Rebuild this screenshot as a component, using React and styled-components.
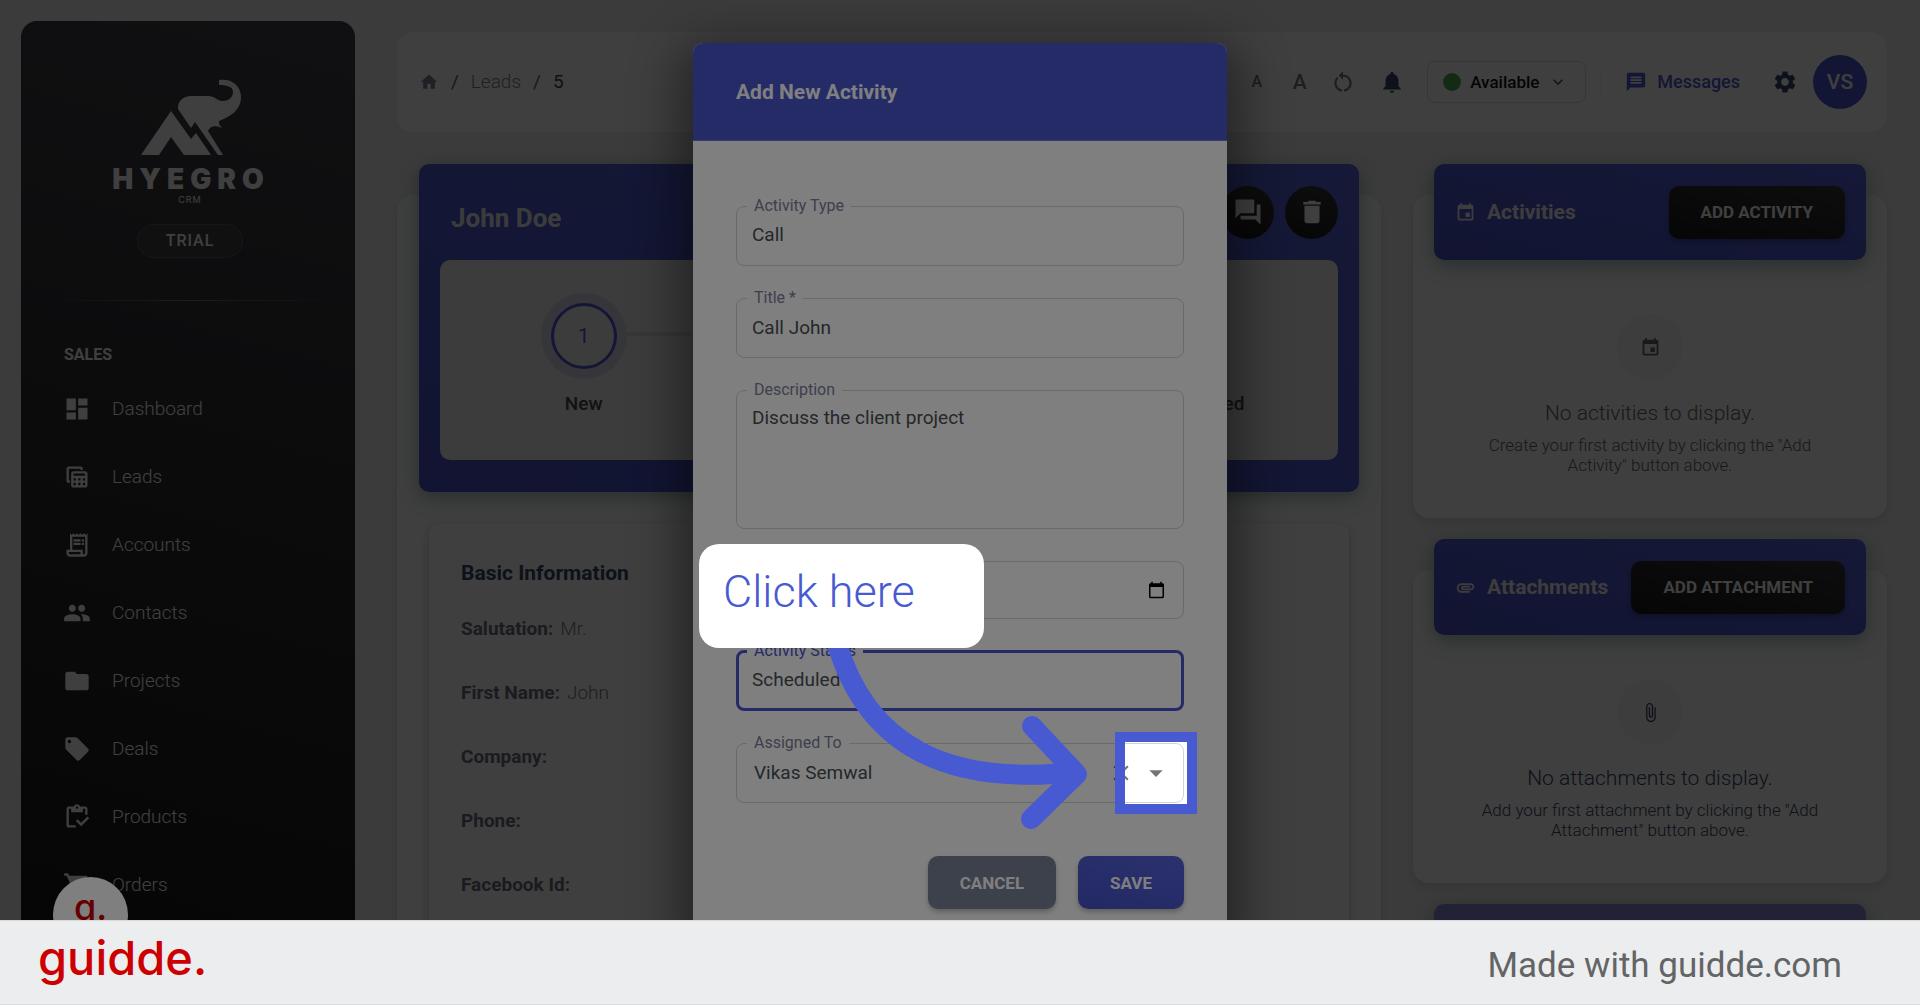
import React, { useState } from "react";
import styled, { createGlobalStyle, css } from "styled-components";
import {
  MdDashboard,
  MdOutlineTableView,
  MdOutlineReceiptLong,
  MdPeople,
  MdFolder,
  MdLocalOffer,
  MdOutlineInventory,
  MdShoppingCart,
  MdHome,
  MdRestartAlt,
  MdNotifications,
  MdExpandMore,
  MdMessage,
  MdSettings,
  MdQuestionAnswer,
  MdDelete,
  MdEvent,
  MdAttachment,
  MdAttachFile,
  MdClose,
  MdArrowDropDown,
} from "react-icons/md";

const GlobalStyle = createGlobalStyle`
  * {
    box-sizing: border-box;
  }
  body {
    margin: 0;
    font-family: Roboto, "Liberation Sans", sans-serif;
    font-size: 19px;
    line-height: 28px;
    color: #344767;
  }
  button, input, select, textarea {
    font: inherit;
    color: inherit;
  }
  a {
    color: inherit;
    text-decoration: none;
  }
  h1, h2, h3, p, dl, dd, ul {
    margin: 0;
    padding: 0;
  }
`;

const blueGradient = "linear-gradient(195deg, #5563da, #4752c8)";
const darkGradient = "linear-gradient(195deg, #36363b, #191919)";

const Page = styled.div`
  display: flex;
  flex-direction: column;
  height: 100vh;
`;

const Stage = styled.div`
  position: relative;
  display: flex;
  flex: 1;
  min-height: 0;
  overflow: hidden;
  background: #ebedeb;
`;

/* ---------- sidebar ---------- */

const Sidebar = styled.aside`
  flex: 0 0 334px;
  display: flex;
  flex-direction: column;
  align-items: center;
  margin: 21px 0 0 21px;
  padding: 58px 0 0 4px;
  border-radius: 16px 16px 0 0;
  background: linear-gradient(195deg, #42424a, #191919);
  color: #fff;
`;

const Brand = styled.div`
  display: flex;
  flex-direction: column;
  align-items: center;
  font-family: Inter, sans-serif;
`;

const BrandName = styled.span`
  margin-top: 8px;
  padding-left: 2px;
  font-size: 28px;
  line-height: 32px;
  font-weight: 900;
  letter-spacing: 6px;
`;

const BrandSub = styled.span`
  font-size: 9px;
  line-height: 10px;
  letter-spacing: 1px;
`;

const Plan = styled.span`
  margin-top: 19px;
  padding: 0 28px;
  border: 1px solid #5c5c60;
  border-radius: 17px;
  background: rgba(255, 255, 255, 0.05);
  font-size: 16px;
  line-height: 32px;
  font-weight: 500;
  letter-spacing: 1px;
`;

const SideRule = styled.hr`
  width: 300px;
  height: 1px;
  margin: 42px 0 0;
  border: 0;
  background: linear-gradient(90deg, transparent, #77777c, transparent);
`;

const SideNav = styled.nav`
  align-self: stretch;
  padding: 40px 38px 0;
`;

const SideTitle = styled.h3`
  padding-left: 1px;
  font-size: 16px;
  line-height: 28px;
  font-weight: 700;
`;

const SideLink = styled.a`
  display: flex;
  align-items: center;
  gap: 21px;
  height: 68px;
  font-weight: 300;

  svg {
    width: 28px;
    height: 28px;
  }
`;

const SideLinks = styled.div`
  margin-top: 6px;
`;

/* ---------- main column ---------- */

const Main = styled.main`
  flex: 1;
  display: flex;
  flex-direction: column;
  gap: 32px;
  min-width: 0;
  padding: 32px 33px 0 42px;
`;

const TopBar = styled.header`
  display: flex;
  align-items: center;
  justify-content: space-between;
  flex-shrink: 0;
  height: 100px;
  padding: 0 20px 0 22px;
  border-radius: 16px;
  background: #fdfdfd;
`;

const Crumbs = styled.nav`
  display: flex;
  align-items: center;
  gap: 12px;
  font-weight: 300;
  color: #7b809a;

  svg {
    width: 20px;
    height: 20px;
  }
  b {
    font-weight: 400;
    color: #344767;
  }
`;

const Slash = styled.span`
  font-weight: 400;
  color: #5c636a;
`;

const Tools = styled.div`
  display: flex;
  align-items: center;
`;

const ToolButton = styled.button`
  display: flex;
  align-items: center;
  justify-content: center;
  width: ${(p) => p.$width || 43}px;
  height: 44px;
  padding: 0;
  border: 0;
  background: none;
  font-size: ${(p) => p.$size || 21}px;
  font-weight: 500;
  color: ${(p) => p.$color || "#777"};

  svg {
    width: 26px;
    height: 26px;
  }
`;

const StatusButton = styled.button`
  display: flex;
  align-items: center;
  gap: 9px;
  width: 159px;
  height: 42px;
  margin: 0 14px 0 7px;
  padding: 0 12px 0 15px;
  border: 1px solid #d8d8d8;
  border-radius: 8px;
  background: none;
  font-size: 17px;
  font-weight: 500;
  color: #111;
  white-space: nowrap;

  svg {
    width: 20px;
    height: 20px;
    color: #555;
  }
`;

const Dot = styled.i`
  flex: 0 0 18px;
  height: 18px;
  border-radius: 50%;
  background: #4caf50;
`;

const MessagesLink = styled.a`
  display: flex;
  align-items: center;
  gap: 10px;
  margin-right: 23px;
  padding-left: 24px;
  border-left: 1px solid #f0f0f0;
  font-size: 18px;
  font-weight: 500;
  color: #4c5bd4;

  svg {
    width: 22px;
    height: 22px;
  }
`;

const Avatar = styled.span`
  width: 54px;
  height: 54px;
  margin-left: 7px;
  border-radius: 50%;
  background: #4a58d0;
  font-size: 21px;
  line-height: 54px;
  font-weight: 500;
  text-align: center;
  color: #fff;
`;

const Columns = styled.div`
  display: flex;
  align-items: flex-start;
  gap: 32px;
`;

const Card = styled.section`
  margin-top: 31px;
  border-radius: 16px;
  background: #fcfcfc;
  box-shadow: 0 5px 8px rgba(0, 0, 0, 0.1);
`;

const LeadCard = styled(Card)`
  flex: 1;
  min-width: 0;
  padding: 0 22px 32px;
`;

const LeadHeader = styled.div`
  margin-top: -31px;
  padding: 0 21px 32px;
  border-radius: 10px;
  background: ${blueGradient};
  box-shadow: 0 5px 20px rgba(0, 60, 60, 0.35);
`;

const LeadBar = styled.div`
  display: flex;
  align-items: center;
  gap: 11px;
  height: 96px;
`;

const LeadName = styled.h1`
  flex: 1;
  padding: 11px 0 0 11px;
  font-size: 26px;
  line-height: 36px;
  font-weight: 700;
  color: #eee;
`;

const RoundButton = styled.button`
  display: flex;
  align-items: center;
  justify-content: center;
  width: 53px;
  height: 53px;
  padding: 0;
  border: 0;
  border-radius: 50%;
  background: ${darkGradient};
  color: #fff;

  svg {
    width: 30px;
    height: 30px;
  }
`;

const Steps = styled.ol`
  display: flex;
  height: 200px;
  margin: 0;
  padding: 33px 42px 0;
  border-radius: 10px;
  background: #f0f0f0;
  list-style: none;
`;

const Step = styled.li`
  position: relative;
  flex: 1;
  display: flex;
  flex-direction: column;
  align-items: center;
  gap: 11px;
  font-weight: 500;
  color: #4a4a4a;

  & + &::before {
    content: "";
    position: absolute;
    top: 39px;
    right: calc(50% + 33px);
    width: calc(100% - 66px);
    height: 4px;
    background: #e0dcdf;
  }
`;

const StepMark = styled.span`
  width: 66px;
  height: 66px;
  margin: 10px;
  border: 3px solid ${(p) => (p.$active ? "#4c5bd4" : "#ddd")};
  border-radius: 50%;
  box-shadow: 0 0 0 10px ${(p) => (p.$active ? "#dad7ea" : "transparent")};
  font-size: 21px;
  line-height: 60px;
  font-weight: 400;
  text-align: center;
  color: #4c5bd4;
`;

const InfoCard = styled.section`
  margin: 32px 10px 0;
  padding: 35px 32px;
  border-radius: 10px;
  box-shadow: 0 3px 8px rgba(0, 0, 0, 0.2);
`;

const InfoTitle = styled.h2`
  font-size: 21px;
  line-height: 28px;
  font-weight: 700;
  color: #344767;
`;

const InfoList = styled.dl`
  margin-top: 10px;

  div {
    display: flex;
    align-items: center;
    gap: 7px;
    height: 64px;
  }
  dt {
    font-weight: 700;
    color: #6c6c7c;
  }
  dd {
    font-weight: 300;
    color: #7b7b8a;
  }
`;

const SideColumn = styled.div`
  flex: 0 0 474px;
  display: flex;
  flex-direction: column;
  gap: 21px;
`;

const PanelCard = styled(Card)`
  padding: 0 21px 43px;
`;

const PanelHeader = styled.div`
  display: flex;
  align-items: center;
  gap: 11px;
  height: 96px;
  margin-top: -31px;
  padding: 0 21px;
  border-radius: 10px;
  background: ${(p) => (p.$plain ? "#8488d8" : blueGradient)};
  box-shadow: 0 5px 20px rgba(0, 60, 60, 0.35);
  color: #f5f5f5;

  svg {
    width: 21px;
    height: 21px;
  }
`;

const PanelTitle = styled.h2`
  flex: 1;
  font-size: 21px;
  line-height: 28px;
  font-weight: 700;
`;

const Button = styled.button`
  height: 53px;
  padding: 0 32px;
  border: 0;
  border-radius: 10px;
  background: ${(p) => p.$background || darkGradient};
  font-size: 17px;
  font-weight: 700;
  color: #fff;
  white-space: nowrap;
  box-shadow: 0 3px 5px rgba(0, 0, 0, 0.25);
`;

const Empty = styled.div`
  display: flex;
  flex-direction: column;
  align-items: center;
  padding: ${(p) => p.$top}px 42px 0;
  font-weight: 300;
  text-align: center;
  color: ${(p) => p.$color};
`;

const EmptyIcon = styled.span`
  display: flex;
  align-items: center;
  justify-content: center;
  width: 66px;
  height: 66px;
  border-radius: 50%;
  background: #f5f5f5;

  svg {
    width: 21px;
    height: 21px;
  }
`;

const EmptyTitle = styled.p`
  margin-top: 19px;
  font-size: 21px;
  line-height: 28px;
`;

const EmptyText = styled.p`
  margin-top: 8px;
  font-size: 17px;
  line-height: 20px;
`;

/* ---------- dialog ---------- */

const Bubble = styled.span`
  position: absolute;
  top: 877px;
  left: 53px;
  width: 75px;
  height: 75px;
  border-radius: 50%;
  background: #fff;
  font-family: Inter, sans-serif;
  font-size: 36px;
  line-height: 60px;
  font-weight: 500;
  text-align: center;
  color: #c00;
`;

const Backdrop = styled.div`
  position: absolute;
  inset: 0;
  background: rgba(0, 0, 0, 0.5);
`;

const Dialog = styled.form`
  position: absolute;
  top: 43px;
  left: 50%;
  width: 534px;
  margin-left: -267px;
  border-radius: 10px;
  background: #fff;
  box-shadow: 0 15px 50px 12px rgba(0, 0, 0, 0.45);
`;

const DialogTitle = styled.h2`
  padding: 35px 43px 34px;
  border-bottom: 1px solid #7078d8;
  border-radius: 10px 10px 0 0;
  background: #4856ce;
  font-size: 21px;
  line-height: 28px;
  font-weight: 700;
  color: #fff;
`;

const DialogBody = styled.div`
  display: flex;
  flex-direction: column;
  gap: 22px;
  padding: 55px 43px 43px;
`;

const FieldBox = styled.fieldset`
  position: relative;
  display: flex;
  min-width: 0;
  height: ${(p) => p.$height || 70}px;
  margin: ${(p) => (p.$bare ? 10 : 0)}px 0 0;
  padding: 0 0 0 10px;
  border: 1px solid #d0d4d6;
  border-radius: 8px;

  ${(p) =>
    p.$focused &&
    css`
      padding-left: 8px;
      border: 3px solid #4856ce;
    `}

  legend {
    padding: 0 7px;
    font-size: 16px;
    line-height: 20px;
    color: ${(p) => (p.$focused ? "#4856ce" : "#7b809a")};
  }
`;

const control = css`
  width: 100%;
  border: 0;
  outline: 0;
  background: none;
  font-size: 19px;
  color: #495057;
`;

const TextInput = styled.input`
  ${control}
  height: ${(p) => p.$height || 38}px;
  padding: 0 15px 0 ${(p) => p.$indent || 5}px;
`;

const SelectInput = styled.select`
  ${control}
  height: 38px;
  padding: 0 5px;
  appearance: none;
`;

const TextArea = styled.textarea`
  ${control}
  height: 120px;
  padding: 6px 5px;
  line-height: 24px;
  resize: none;
`;

const FieldActions = styled.span`
  position: absolute;
  top: 4px;
  right: 11px;
  display: flex;
  gap: 3px;
`;

const FieldAction = styled.button`
  display: flex;
  align-items: center;
  justify-content: center;
  width: 32px;
  height: 32px;
  padding: 0;
  border: 0;
  background: none;
  color: #757575;
`;

const DialogActions = styled.div`
  display: flex;
  justify-content: flex-end;
  gap: 22px;
  margin-top: 31px;
`;

/* ---------- tutorial marks ---------- */

const Spotlight = styled.span`
  position: absolute;
  top: -21px;
  right: -14px;
  width: 82px;
  height: 82px;
  border: 10px solid #485ad1;
  box-shadow: 0 0 0 2400px rgba(0, 0, 0, 0.5);
  pointer-events: none;
`;

const Arrow = styled.svg`
  position: absolute;
  top: 587px;
  left: 127px;
  pointer-events: none;
`;

const Callout = styled.div`
  position: absolute;
  top: 501px;
  left: 6px;
  width: 285px;
  height: 104px;
  padding: 0 24px;
  border-radius: 20px;
  background: #fff;
  font-size: 45px;
  line-height: 96px;
  font-weight: 300;
  color: #485ad1;
  white-space: nowrap;
`;

const Footer = styled.footer`
  display: flex;
  align-items: center;
  justify-content: space-between;
  flex: 0 0 85px;
  padding: 0 78px 0 38px;
  border-top: 1px solid #d8d9da;
  border-bottom: 1px solid #dcdddf;
  background: #ecedef;
`;

const FooterLogo = styled.span`
  padding-bottom: 10px;
  font-family: Inter, sans-serif;
  font-size: 47px;
  line-height: 64px;
  font-weight: 500;
  color: #c00;
`;

const FooterNote = styled.span`
  padding-top: 6px;
  font-size: 35px;
  line-height: 44px;
  color: #636466;
`;

const navItems = [
  { label: "Dashboard", icon: MdDashboard },
  { label: "Leads", icon: MdOutlineTableView },
  { label: "Accounts", icon: MdOutlineReceiptLong },
  { label: "Contacts", icon: MdPeople },
  { label: "Projects", icon: MdFolder },
  { label: "Deals", icon: MdLocalOffer },
  { label: "Products", icon: MdOutlineInventory },
  { label: "Orders", icon: MdShoppingCart },
];

const steps = ["New", "Contacted", "Qualified", "Disqualified"];

const leadInfo = [
  ["Salutation", "Mr."],
  ["First Name", "John"],
  ["Company", ""],
  ["Phone", ""],
  ["Facebook Id", ""],
];

const ElephantLogo = () => (
  <svg width="102" height="76" viewBox="139 79 102 76" fill="#fff">
    <path d="M141 155L171 111L191 139L196 133L211 155H184L171 137L159 155Z" />
    <path d="M178 109C177 101 184 96 191 96H208C215 96 217 101 223 101C229 101 233 97 233 92C233 87 228 85 219 85V80C232 78 241 86 241 97C241 108 234 115 219 121L219 124L222 128C215 125 210 126 208 131L223 155H218L195 122L191 128Z" />
  </svg>
);

const Field = ({ id, label, height, focused, children }) => (
  <FieldBox $height={height} $focused={focused} $bare={!label}>
    {label && (
      <legend>
        <label htmlFor={id}>{label}</label>
      </legend>
    )}
    {children}
  </FieldBox>
);

const Panel = ({ title, action, icon: Icon, emptyIcon: EmptyGlyph, top, color, heading, text }) => (
  <PanelCard>
    <PanelHeader>
      <Icon />
      <PanelTitle>{title}</PanelTitle>
      <Button type="button">{action}</Button>
    </PanelHeader>
    <Empty $top={top} $color={color}>
      <EmptyIcon>
        <EmptyGlyph />
      </EmptyIcon>
      <EmptyTitle>{heading}</EmptyTitle>
      <EmptyText>{text}</EmptyText>
    </Empty>
  </PanelCard>
);

const ActivityDialog = () => {
  const [form, setForm] = useState({
    type: "Call",
    title: "Call John",
    description: "Discuss the client project",
    date: "",
    status: "Scheduled",
    assignee: "Vikas Semwal",
  });
  const bind = (id) => ({
    id,
    value: form[id],
    onChange: (e) => setForm({ ...form, [id]: e.target.value }),
  });

  return (
    <Dialog onSubmit={(e) => e.preventDefault()}>
      <DialogTitle>Add New Activity</DialogTitle>
      <DialogBody>
        <Field id="type" label="Activity Type">
          <SelectInput {...bind("type")}>
            <option>Call</option>
          </SelectInput>
        </Field>
        <Field id="title" label="Title *">
          <TextInput {...bind("title")} />
        </Field>
        <Field id="description" label="Description" height={149}>
          <TextArea {...bind("description")} />
        </Field>
        <Field id="date" height={58}>
          <TextInput type="date" aria-label="Date" $height={56} {...bind("date")} />
        </Field>
        <Field id="status" label="Activity Status" focused>
          <SelectInput {...bind("status")}>
            <option>Scheduled</option>
          </SelectInput>
        </Field>
        <Field id="assignee" label="Assigned To">
          <TextInput $indent={7} {...bind("assignee")} />
          <FieldActions>
            <FieldAction type="button" aria-label="Clear">
              <MdClose size={26} />
            </FieldAction>
            <FieldAction type="button" aria-label="Open">
              <MdArrowDropDown size={32} />
            </FieldAction>
          </FieldActions>
          <Spotlight />
        </Field>
        <DialogActions>
          <Button type="button" $background="#7b8299">
            CANCEL
          </Button>
          <Button type="submit" $background={blueGradient}>
            SAVE
          </Button>
        </DialogActions>
      </DialogBody>
      <Arrow width="280" height="210" viewBox="820 630 280 210" fill="none" stroke="#485ad1" strokeWidth="20">
        <path d="M836 640C866 748 950 786 1076 772" />
        <path d="M1032 726L1077 774L1031 819" strokeLinecap="round" strokeLinejoin="round" />
      </Arrow>
      <Callout>Click here</Callout>
    </Dialog>
  );
};

export default function App() {
  return (
    <Page>
      <GlobalStyle />
      <Stage>
        <Sidebar>
          <Brand>
            <ElephantLogo />
            <BrandName>HYEGRO</BrandName>
            <BrandSub>CRM</BrandSub>
          </Brand>
          <Plan>TRIAL</Plan>
          <SideRule />
          <SideNav>
            <SideTitle>SALES</SideTitle>
            <SideLinks>
              {navItems.map(({ label, icon: Icon }) => (
                <SideLink key={label} href="#">
                  <Icon />
                  {label}
                </SideLink>
              ))}
            </SideLinks>
          </SideNav>
        </Sidebar>

        <Main>
          <TopBar>
            <Crumbs>
              <MdHome />
              <Slash>/</Slash>
              <a href="#">Leads</a>
              <Slash>/</Slash>
              <b>5</b>
            </Crumbs>
            <Tools>
              <ToolButton $size={16}>A</ToolButton>
              <ToolButton>A</ToolButton>
              <ToolButton aria-label="Reset text size">
                <MdRestartAlt />
              </ToolButton>
              <ToolButton $width={56} $color="#344767" aria-label="Notifications">
                <MdNotifications />
              </ToolButton>
              <StatusButton>
                <Dot />
                Available
                <MdExpandMore />
              </StatusButton>
              <MessagesLink href="#">
                <MdMessage />
                Messages
              </MessagesLink>
              <ToolButton $color="#344767" aria-label="Settings">
                <MdSettings />
              </ToolButton>
              <Avatar>VS</Avatar>
            </Tools>
          </TopBar>

          <Columns>
            <LeadCard>
              <LeadHeader>
                <LeadBar>
                  <LeadName>John Doe</LeadName>
                  <RoundButton aria-label="Comments">
                    <MdQuestionAnswer />
                  </RoundButton>
                  <RoundButton aria-label="Delete">
                    <MdDelete />
                  </RoundButton>
                </LeadBar>
                <Steps>
                  {steps.map((step, i) => (
                    <Step key={step}>
                      <StepMark $active={i === 0}>{i + 1}</StepMark>
                      {step}
                    </Step>
                  ))}
                </Steps>
              </LeadHeader>
              <InfoCard>
                <InfoTitle>Basic Information</InfoTitle>
                <InfoList>
                  {leadInfo.map(([name, value]) => (
                    <div key={name}>
                      <dt>{name}:</dt>
                      <dd>{value}</dd>
                    </div>
                  ))}
                </InfoList>
              </InfoCard>
            </LeadCard>

            <SideColumn>
              <Panel
                title="Activities"
                action="ADD ACTIVITY"
                icon={MdEvent}
                emptyIcon={MdEvent}
                top={54}
                color="#666"
                heading="No activities to display."
                text={'Create your first activity by clicking the "Add Activity" button above.'}
              />
              <Panel
                title="Attachments"
                action="ADD ATTACHMENT"
                icon={MdAttachment}
                emptyIcon={MdAttachFile}
                top={44}
                color="#344767"
                heading="No attachments to display."
                text={'Add your first attachment by clicking the "Add Attachment" button above.'}
              />
              <PanelCard>
                <PanelHeader $plain />
              </PanelCard>
            </SideColumn>
          </Columns>
        </Main>

        <Backdrop />
        <Bubble>g.</Bubble>
        <ActivityDialog />
      </Stage>
      <Footer>
        <FooterLogo>guidde.</FooterLogo>
        <FooterNote>Made with guidde.com</FooterNote>
      </Footer>
    </Page>
  );
}
